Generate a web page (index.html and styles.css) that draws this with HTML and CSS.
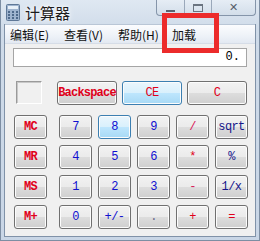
FILE: index.html
```html
<!DOCTYPE html>
<html lang="zh-CN">
<head>
    <meta charset="UTF-8">
    <title>计算器</title>
    <link rel="stylesheet" href="styles.css">
</head>
<body>
    <div class="window">
        <div class="titlebar">
            <svg class="app-icon" width="14" height="17" viewBox="0 0 14 17">
                <rect x="0.5" y="0.5" width="13" height="16" rx="1" fill="#9fb4cf" stroke="#5f7897"/>
                <rect x="2" y="2" width="10" height="3" fill="#e8f0f8"/>
                <g fill="#4f6a8c">
                    <rect x="2" y="7" width="2" height="2"/><rect x="6" y="7" width="2" height="2"/><rect x="10" y="7" width="2" height="2"/>
                    <rect x="2" y="10" width="2" height="2"/><rect x="6" y="10" width="2" height="2"/><rect x="10" y="10" width="2" height="2"/>
                    <rect x="2" y="13" width="2" height="2"/><rect x="6" y="13" width="2" height="2"/><rect x="10" y="13" width="2" height="2"/>
                </g>
            </svg>
            <span class="title">计算器</span>
            <div class="caption-buttons">
                <div class="cap cap-min"><span class="min-glyph"></span></div>
                <div class="cap cap-max"><span class="max-glyph"></span></div>
                <div class="cap cap-close">✕</div>
            </div>
        </div>

        <div class="client">
            <div class="menubar">
                <span class="menu-item">编辑(E)</span>
                <span class="menu-item">查看(V)</span>
                <span class="menu-item">帮助(H)</span>
                <span class="menu-item">加载</span>
            </div>

            <div class="calc">
                <div class="display">0.</div>

                <div class="top-row">
                    <div class="mem-indicator"></div>
                    <div class="edit-keys">
                        <button class="key red strong">Backspace</button>
                        <button class="key red hot">CE</button>
                        <button class="key red">C</button>
                    </div>
                </div>

                <div class="keypad">
                    <button class="key red strong">MC</button>
                    <button class="key blue">7</button>
                    <button class="key blue hot">8</button>
                    <button class="key blue">9</button>
                    <button class="key pink">/</button>
                    <button class="key navy">sqrt</button>

                    <button class="key red strong">MR</button>
                    <button class="key blue">4</button>
                    <button class="key blue">5</button>
                    <button class="key blue">6</button>
                    <button class="key red">*</button>
                    <button class="key navy">%</button>

                    <button class="key red strong">MS</button>
                    <button class="key blue">1</button>
                    <button class="key blue">2</button>
                    <button class="key blue">3</button>
                    <button class="key pink">-</button>
                    <button class="key navy">1/x</button>

                    <button class="key red strong">M+</button>
                    <button class="key blue">0</button>
                    <button class="key blue">+/-</button>
                    <button class="key grey">.</button>
                    <button class="key red">+</button>
                    <button class="key red">=</button>
                </div>
            </div>
        </div>

        <div class="highlight"></div>
    </div>
</body>
</html>
```

FILE: styles.css
```css
body { margin: 0; background: #fff; }
.window { position: relative; width: 260px; height: 241px; box-sizing: border-box; padding: 0 3px 4px 3px; background: linear-gradient(#dfe8f2, #cfdbe9 30px, #c9d6e6); border: 1px solid #7d8ea3; border-top: none; font-family: "Noto Sans CJK SC", "Noto Sans", sans-serif; }

.titlebar { height: 24px; display: flex; align-items: center; }
.app-icon { margin-left: 2px; margin-top: 1px; }
.title { margin-left: 5px; font-size: 15px; color: #1c1c1c; text-shadow: 0 0 6px #fff, 0 0 3px #fff; }
.caption-buttons { position: absolute; top: 0; right: 3px; display: flex; height: 15px; border: 1px solid #8595aa; border-top: none; border-radius: 0 0 4px 4px; background: linear-gradient(#e6edf5, #d3deea); overflow: hidden; }
.cap { display: flex; align-items: center; justify-content: center; height: 15px; }
.cap-min { width: 27px; border-right: 1px solid #9aa8ba; }
.cap-max { width: 26px; border-right: 1px solid #9aa8ba; }
.cap-close { width: 43px; font-size: 11px; font-weight: bold; color: #555e6a; font-family: "DejaVu Sans", sans-serif; }
.min-glyph { width: 9px; height: 2px; background: #5a6470; margin-top: 6px; }
.max-glyph { width: 8px; height: 5px; border: 1px solid #6a7480; border-top-width: 2px; }

.client { border: 1px solid #8092a8; border-top: none; background: #f0f0f0; }
.menubar { height: 20px; display: flex; align-items: center; padding-left: 5px; background: linear-gradient(#fbfcfe, #eef2f8 60%, #e3e9f2); border-top: 1px solid #b9c6d6; border-bottom: 1px solid #d6dde7; box-sizing: border-box; }
.menu-item { width: 54px; flex: none; font-size: 12px; color: #111; }

.calc { padding: 4px 8px 7px 8px; }
.display { height: 19px; box-sizing: border-box; border: 1px solid #a5a5a5; background: #fff; text-align: right; padding-right: 6px; font-family: "Liberation Mono", monospace; font-size: 12px; line-height: 17px; color: #000; }

.top-row { display: flex; align-items: flex-start; margin-top: 14px; height: 24px; }
.mem-indicator { width: 26px; height: 23px; margin-left: 3px; box-sizing: border-box; border: 1px solid; border-color: #9a9a9a #ffffff #ffffff #9a9a9a; box-shadow: inset 1px 1px 0 #c8c8c8; }
.edit-keys { margin-left: auto; display: grid; grid-template-columns: repeat(3, 60px); column-gap: 5px; }

.keypad { display: grid; grid-template-columns: 39px repeat(5, 33px); grid-auto-rows: 24px; column-gap: 6px; row-gap: 6px; margin-top: 10px; padding-left: 1px; }
.keypad .key { width: 33px; }

.key { height: 24px; margin: 0; padding: 0; box-sizing: border-box; border: 1px solid #707070; border-radius: 3px; background: linear-gradient(#f2f2f2 0%, #ebebeb 50%, #dddddd 50%, #cfcfcf 100%); box-shadow: inset 0 0 0 1px #fcfcfc; font-family: "Liberation Mono", monospace; font-size: 12px; letter-spacing: -0.6px; line-height: 22px; text-align: center; cursor: pointer; }
.key.strong { font-weight: bold; letter-spacing: -0.8px; }
.key.hot { border-color: #3c7fb1; background: linear-gradient(#eaf6fd 0%, #d9f0fc 50%, #bee6fd 50%, #a7d9f5 100%); }
.red { color: #e0001a; }
.pink { color: #d8205a; }
.blue { color: #1010d0; }
.navy { color: #15158a; }
.grey { color: #6a6a8a; }

.highlight { position: absolute; left: 161px; top: 13px; width: 57px; height: 40px; box-sizing: border-box; border: 5px solid #ec2b2b; }
```
